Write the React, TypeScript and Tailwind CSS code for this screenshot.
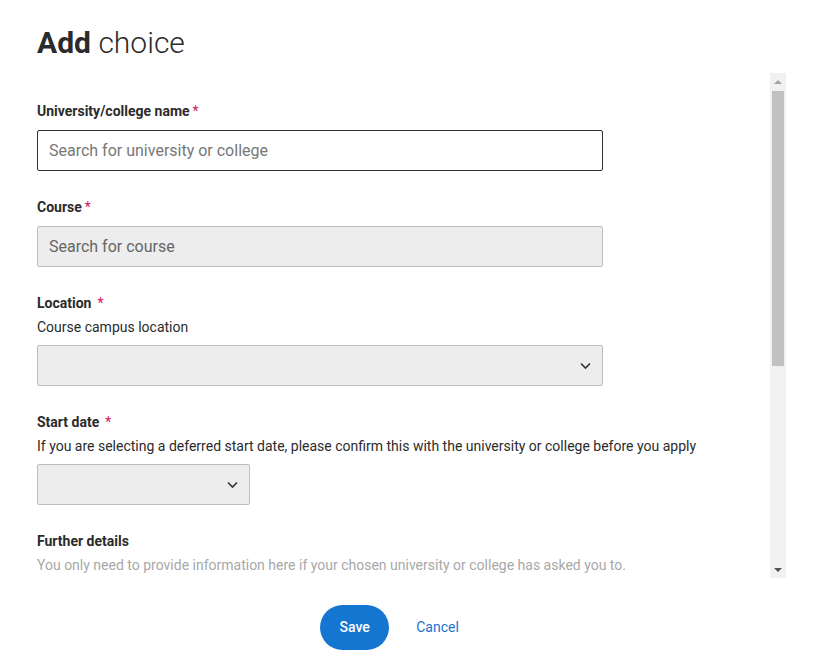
import React from 'react';

function Chevron() {
  return (
    <svg width="11" height="7" viewBox="0 0 11 7" fill="none" className="absolute right-[11px] top-1/2 -translate-y-1/2">
      <path d="M1 1l4.5 4.5L10 1" stroke="#333" strokeWidth="1.6" />
    </svg>
  );
}

function Label({ text, wide }: { text: string; wide?: boolean }) {
  return (
    <div className="h-5 text-[14px] leading-5 font-bold text-[#2b2b2b]">
      {text}
      <span className={`text-[#d4145a] font-normal ${wide ? 'ml-[6px]' : 'ml-[3px]'}`}>*</span>
    </div>
  );
}

// classic scrollbar drawn as a column beside the clipped form
function ScrollBar() {
  return (
    <div className="w-4 shrink-0 bg-[#f1f1f1] flex flex-col">
      <div className="h-[17px] flex items-center justify-center">
        <div className="w-0 h-0 border-x-[4px] border-x-transparent border-b-[4px] border-b-[#a3a3a3]" />
      </div>
      <div className="mx-[2px] mt-[1px] h-[275px] bg-[#c1c1c1]" />
      <div className="flex-1" />
      <div className="h-[17px] flex items-center justify-center">
        <div className="w-0 h-0 border-x-[4px] border-x-transparent border-t-[4px] border-t-[#505050]" />
      </div>
    </div>
  );
}

export default function App() {
  return (
    <div className="w-[818px] h-[671px] bg-white font-['Roboto',sans-serif] text-[#2b2b2b] overflow-hidden">
      <h1 className="pl-[37px] pt-[25px] h-[73px] text-[30px] leading-[36px] text-[#2b2b2b]">
        <span className="font-bold">Add</span> <span className="font-light">choice</span>
      </h1>

      <div className="w-[786px] h-[505px] flex">
        <div className="flex-1 overflow-hidden pl-[37px] pt-[28px]">
          {/* University */}
          <div className="mb-[26px]">
            <Label text="University/college name" />
            <input
              placeholder="Search for university or college"
              className="mt-[9px] w-[566px] h-[41px] border border-[#333] rounded-[2px] px-[11px] text-[16px] placeholder:text-[#777] outline-none"
            />
          </div>

          {/* Course */}
          <div className="mb-[26px]">
            <Label text="Course" />
            <input
              disabled
              placeholder="Search for course"
              className="mt-[9px] w-[566px] h-[41px] border border-[#bdbdbd] bg-[#ededed] rounded-[2px] px-[11px] text-[16px] placeholder:text-[#666] outline-none"
            />
          </div>

          {/* Location */}
          <div className="mb-[26px]">
            <Label text="Location" wide />
            <div className="mt-1 h-5 text-[14px] leading-5">Course campus location</div>
            <div className="relative mt-2 w-[566px] h-[41px] border border-[#bdbdbd] bg-[#ededed] rounded-[2px]">
              <Chevron />
            </div>
          </div>

          {/* Start date */}
          <div className="mb-[26px]">
            <Label text="Start date" wide />
            <div className="mt-1 h-5 text-[14px] leading-5">
              If you are selecting a deferred start date, please confirm this with the university or college before you apply
            </div>
            <div className="relative mt-2 w-[213px] h-[41px] border border-[#bdbdbd] bg-[#ededed] rounded-[2px]">
              <Chevron />
            </div>
          </div>

          {/* Further details */}
          <div>
            <div className="h-5 text-[14px] leading-5 font-bold">Further details</div>
            <div className="mt-1 h-5 text-[14px] leading-5 text-[#a8a8a8]">
              You only need to provide information here if your chosen university or college has asked you to.
            </div>
          </div>
        </div>
        <ScrollBar />
      </div>

      <div className="w-[779px] flex justify-center items-center gap-[27px] pt-[27px]">
        <button className="w-[69px] h-[45px] rounded-full bg-[#1476d1] text-white text-[14px] font-medium">Save</button>
        <button className="text-[14px] text-[#1a73d0]">Cancel</button>
      </div>
    </div>
  );
}
